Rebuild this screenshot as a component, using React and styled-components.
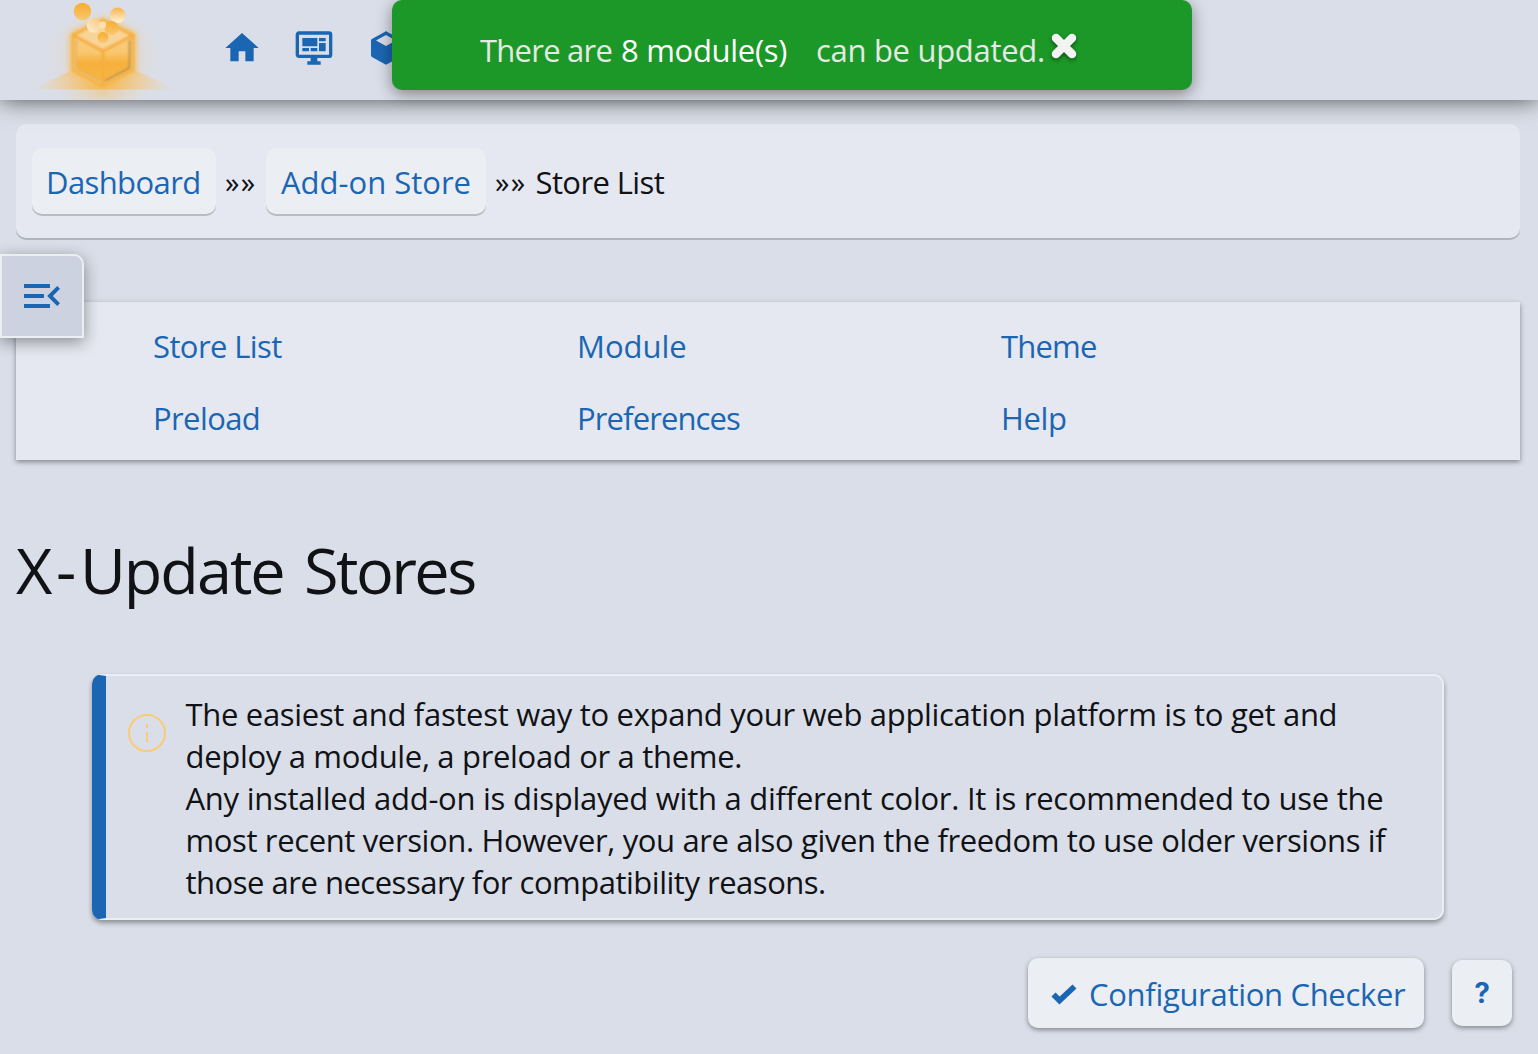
import React from "react";
import styled, { createGlobalStyle } from "styled-components";

const c = {
  page: "#dadee8",
  panel: "#e5e8f0",
  raised: "#ebeef3",
  toggle: "#ccd2e0",
  blue: "#1b66b3",
  green: "#1c9828",
  ink: "#101215",
  gold: "#fbcb74",
};

const GlobalStyle = createGlobalStyle`
  * { box-sizing: border-box; }
  body {
    margin: 0;
    background: ${c.page};
    color: ${c.ink};
    font: 400 31px/42px "Open Sans", "Noto Sans", sans-serif;
  }
`;

const Page = styled.div`
  position: relative;
  min-height: 1054px;
  overflow: hidden;
`;

const Header = styled.header`
  display: flex;
  align-items: flex-start;
  height: 100px;
  padding-left: 22px;
  background: ${c.page};
  box-shadow: 0 0 22px rgba(0, 0, 0, 0.65);
  clip-path: inset(0 0 -40px 0);
`;

const Logo = styled.svg`
  width: 168px;
  height: 100px;
  flex: none;
`;

const HeaderNav = styled.nav`
  display: flex;
  gap: 32px;
  padding: 28px 0 0 32px;
`;

const Icon = styled.svg`
  display: block;
  flex: none;
  width: ${(p) => p.$size || 40}px;
  height: ${(p) => p.$size || 40}px;
  fill: ${c.blue};
`;

const Text = styled.span`
  letter-spacing: ${(p) => p.$track || 0}px;
  white-space: pre;
`;

const Notice = styled.div`
  position: absolute;
  top: 0;
  left: 392px;
  width: 800px;
  height: 90px;
  display: flex;
  align-items: flex-start;
  padding: 29px 0 0 88px;
  border-radius: 10px;
  background: ${c.green};
  color: #e4e9e4;
  box-shadow: 0 4px 16px rgba(0, 0, 0, 0.42);
`;

const NoticeStrong = styled(Text)`
  width: 195px;
  margin-left: 9px;
  color: #fff;
`;

const NoticeLead = styled(Text)`
  width: 132px;
`;

const NoticeTail = styled(Text)`
  width: 231px;
`;

const CloseMark = styled.svg`
  width: 36px;
  height: 36px;
  margin: -1px 0 0 -1px;
  filter: drop-shadow(0 2px 2px rgba(0, 0, 0, 0.45));
`;

const Breadcrumb = styled.nav`
  display: flex;
  align-items: center;
  height: 114px;
  margin: 24px 18px 0 16px;
  padding: 0 16px;
  border-radius: 10px;
  background: ${c.panel};
  box-shadow: 0 2px 0 #b0b3bd;
`;

const Crumb = styled.a`
  width: ${(p) => p.$w}px;
  height: 66px;
  padding: 13px 0 0 ${(p) => p.$indent}px;
  border-radius: 10px;
  background: ${c.raised};
  color: ${c.blue};
  box-shadow: 0 2px 0 #b9bcc0;
`;

const Separator = styled.span`
  width: 50px;
  padding: 1px 0 0 9px;
  font-size: 29px;
  line-height: 42px;
  letter-spacing: 1.5px;
`;

const Current = styled(Text)`
  padding-top: 2px;
  margin-left: -0.5px;
`;

const SideToggle = styled.button`
  position: absolute;
  top: 254px;
  left: 0;
  width: 84px;
  height: 84px;
  display: flex;
  padding: 16px;
  border: 2px solid ${c.raised};
  border-radius: 0 10px 0 0;
  background: ${c.toggle};
  box-shadow: 0 4px 16px rgba(0, 0, 0, 0.4);
`;

const Menu = styled.nav`
  display: grid;
  grid-template-columns: repeat(3, 424px);
  grid-auto-rows: 72px;
  align-items: center;
  height: 158px;
  margin: 64px 18px 0 16px;
  padding: 8px 0 0 137px;
  background: ${c.panel};
  color: ${c.blue};
  box-shadow: 0 2px 5px rgba(0, 0, 0, 0.4);
`;

const Title = styled.h1`
  margin: 66px 16px 0;
  font-size: 63px;
  font-weight: 400;
  line-height: 88px;
  word-spacing: 6px;
`;

const Tip = styled.section`
  display: flex;
  width: 1352px;
  height: 246px;
  margin: 60px 0 0 92px;
  padding: 17px 0 0 22px;
  border: 2px solid ${c.raised};
  border-left: 14px solid ${c.blue};
  border-radius: 10px;
  box-shadow: 0 3px 5px rgba(0, 0, 0, 0.36);
`;

const InfoIcon = styled.svg`
  width: 38px;
  height: 38px;
  margin-top: 21px;
  flex: none;
`;

const TipBody = styled.div`
  display: flex;
  flex-direction: column;
  margin-left: 19.5px;
`;

const Actions = styled.div`
  display: flex;
  justify-content: flex-end;
  align-items: center;
  gap: 28px;
  margin: 38px 26px 0 0;
`;

const Button = styled.button`
  display: flex;
  align-items: center;
  justify-content: flex-start;
  width: ${(p) => p.$w}px;
  height: ${(p) => p.$h}px;
  margin: 0;
  padding: ${(p) => p.$pad};
  border: 0;
  border-radius: 10px;
  background: ${c.raised};
  color: ${c.blue};
  font: inherit;
  box-shadow: 0 2px 5px rgba(0, 0, 0, 0.4);
`;

const CheckIcon = styled.svg`
  width: 39px;
  height: 28px;
  margin-top: 4px;
  flex: none;
`;

const Help = styled.span`
  width: 100%;
  font: 700 28px/34px Inter, sans-serif;
  text-align: center;
`;

const paths = {
  home: "M10 20v-6h4v6h5v-8h3L12 3 2 12h3v8z",
  monitor:
    "M21,16V4H3V16H21M21,2A2,2 0 0,1 23,4V16A2,2 0 0,1 21,18H14V20H16V22H8V20H10V18H3C1.89,18 1,17.1 1,16V4C1,2.89 1.89,2 3,2H21M5,6H14V11H5V6M15,6H19V8H15V6M19,9V14H15V9H19M5,12H9V14H5V12M10,12H14V14H10V12Z",
  cube: "M21,16.5C21,16.88 20.79,17.21 20.47,17.38L12.57,21.82C12.41,21.94 12.21,22 12,22C11.79,22 11.59,21.94 11.43,21.82L3.53,17.38C3.21,17.21 3,16.88 3,16.5V7.5C3,7.12 3.21,6.79 3.53,6.62L11.43,2.18C11.59,2.06 11.79,2 12,2C12.21,2 12.41,2.06 12.57,2.18L20.47,6.62C20.79,6.79 21,7.12 21,7.5V16.5M12,4.15L6.04,7.5L12,10.85L17.96,7.5L12,4.15Z",
  menu: "M21,15.61L19.59,17L14.58,12L19.59,7L21,8.39L17.44,12L21,15.61M3,6H16V8H3V6M3,13V11H13V13H3M3,18V16H16V18H3Z",
};

const Glyph = ({ name, size }) => (
  <Icon viewBox="0 0 24 24" $size={size}>
    <path d={paths[name]} />
  </Icon>
);

const BoxLogo = () => (
  <Logo viewBox="22 0 168 100">
    <defs>
      <radialGradient id="halo">
        <stop offset="0" stopColor="#f8b640" stopOpacity=".6" />
        <stop offset=".5" stopColor="#f8c060" stopOpacity=".28" />
        <stop offset="1" stopColor="#f8d080" stopOpacity="0" />
      </radialGradient>
      <radialGradient id="floor" gradientUnits="userSpaceOnUse" cx="103" cy="84" r="68">
        <stop offset="0" stopColor="#f8b23c" stopOpacity=".85" />
        <stop offset=".5" stopColor="#f3c67e" stopOpacity=".7" />
        <stop offset="1" stopColor="#ecd0a0" stopOpacity=".1" />
      </radialGradient>
      <linearGradient id="face" x1="0" y1="0" x2="0" y2="1">
        <stop offset="0" stopColor="#f8ca7c" />
        <stop offset=".3" stopColor="#f9c873" />
        <stop offset=".55" stopColor="#f6b03a" />
        <stop offset="1" stopColor="#f7b648" />
      </linearGradient>
      <linearGradient id="pale" x1="0" y1="0" x2="0" y2="1">
        <stop offset="0" stopColor="#f8b54a" />
        <stop offset="1" stopColor="#fff3df" />
      </linearGradient>
      <linearGradient id="paler" x1="1" y1="0" x2="0" y2="1">
        <stop offset="0" stopColor="#f9c773" />
        <stop offset="1" stopColor="#fdf0dc" />
      </linearGradient>
      <linearGradient id="deep" x1="0" y1="0" x2="0" y2="1">
        <stop offset="0" stopColor="#f7ad2e" />
        <stop offset="1" stopColor="#f9c772" />
      </linearGradient>
      <filter id="soft" x="-30%" y="-30%" width="160%" height="160%">
        <feGaussianBlur stdDeviation="3" />
      </filter>
      <filter id="fine"><feGaussianBlur stdDeviation=".8" /></filter>
    </defs>
    <ellipse cx="103" cy="56" rx="62" ry="48" fill="url(#halo)" opacity=".4" />
    <ellipse cx="103" cy="94" rx="46" ry="18" fill="url(#halo)" opacity=".6" />
    <path d="M32 89.500 72 70h63l41 19.500z" fill="url(#floor)" />
    <path d="M103 20 134 34v37l-31 15-31-15V34z" fill="#f8b94e" stroke="#f8c062" strokeWidth="5" opacity=".85" filter="url(#soft)" />
    <g filter="url(#fine)">
      <path d="M103 20 133 35v35l-30 16-30-16V35z" fill="#f8c66c" stroke="#f6b347" strokeWidth="3" />
      <path d="M103 22 129 36l-26 13-26-13z" fill="#f8d498" />
      <path d="M76 39 102 53v29L76 68z" fill="url(#face)" />
      <path d="M130 39 104 53v29l26-14z" fill="url(#face)" />
      <path d="M76.500 40v28.500l24 12.500" fill="none" stroke="#cfaa66" strokeWidth="1" />
      <path d="M129.500 40v28L105 81" fill="none" stroke="#957a45" strokeWidth="1.300" />
      <path d="M73 35 103 51l30-16M103 51v34" fill="none" stroke="#f5ae3e" strokeWidth="3" />
    </g>
    <circle cx="82.500" cy="11.500" r="8.700" fill="url(#deep)" />
    <circle cx="117.700" cy="15.300" r="7.800" fill="url(#pale)" />
    <circle cx="111.500" cy="28" r="7" fill="url(#deep)" />
    <circle cx="94" cy="25.500" r="7.300" fill="url(#paler)" />
    <circle cx="102.500" cy="25" r="3.600" fill="#fae0b4" />
    <circle cx="103" cy="37.500" r="5.500" fill="url(#deep)" />
  </Logo>
);

const menuItems = [
  ["Store List", -0.6],
  ["Module", 0],
  ["Theme", -0.8],
  ["Preload", -0.6],
  ["Preferences", -0.88],
  ["Help", -0.4],
];

const tipLines = [
  ["The easiest and fastest way to expand your web application platform is to get and", -0.31],
  ["deploy a module, a preload or a theme.", -0.32],
  ["Any installed add-on is displayed with a different color. It is recommended to use the", -0.26],
  ["most recent version. However, you are also given the freedom to use older versions if", -0.37],
  ["those are necessary for compatibility reasons.", -0.49],
];

export default function App() {
  return (
    <Page>
      <GlobalStyle />
      <Header>
        <BoxLogo />
        <HeaderNav>
          <Glyph name="home" />
          <Glyph name="monitor" />
          <Glyph name="cube" />
        </HeaderNav>
      </Header>
      <Breadcrumb>
        <Crumb $w={184} $indent={14}><Text $track={-0.6}>Dashboard</Text></Crumb>
        <Separator>»»</Separator>
        <Crumb $w={220} $indent={15}><Text>Add-on Store</Text></Crumb>
        <Separator>»»</Separator>
        <Current $track={-0.6}>Store List</Current>
      </Breadcrumb>
      <Menu>
        {menuItems.map(([label, track]) => (
          <Text key={label} $track={track}>{label}</Text>
        ))}
      </Menu>
      <Title>
        <Text $track={3.6}>X-</Text>
        <Text $track={-2}>Update </Text>
        <Text $track={-2.6}>Stores</Text>
      </Title>
      <Tip>
        <InfoIcon viewBox="0 0 38 38">
          <circle cx="19" cy="19" r="18" fill="none" stroke={c.gold} strokeWidth="2" />
          <path d="M19 10v4M19 18v10" stroke={c.gold} strokeWidth="2" />
        </InfoIcon>
        <TipBody>
          {tipLines.map(([line, track]) => (
            <Text key={line} $track={track}>{line}</Text>
          ))}
        </TipBody>
      </Tip>
      <Actions>
        <Button $w={396} $h={70} $pad="2px 0 0 22px">
          <CheckIcon viewBox="0 0 39 28">
            <path d="M3.500 12.500 9.500 18.500 24.500 4.500" fill="none" stroke={c.blue} strokeWidth="5.800" />
          </CheckIcon>
          <Text $track={-0.31}>Configuration Checker</Text>
        </Button>
        <Button $w={60} $h={66} $pad="0"><Help>?</Help></Button>
      </Actions>
      <SideToggle><Glyph name="menu" size={48} /></SideToggle>
      <Notice>
        <NoticeLead $track={-0.75}>There are</NoticeLead>
        <NoticeStrong $track={-0.3}>8 module(s)</NoticeStrong>
        <NoticeTail $track={-0.3}>can be updated.</NoticeTail>
        <CloseMark viewBox="0 0 36 36">
          <path d="M10 10 26 26M26 10 10 26" stroke="#f3f3f3" strokeWidth="8.500" strokeLinecap="round" />
        </CloseMark>
      </Notice>
    </Page>
  );
}
